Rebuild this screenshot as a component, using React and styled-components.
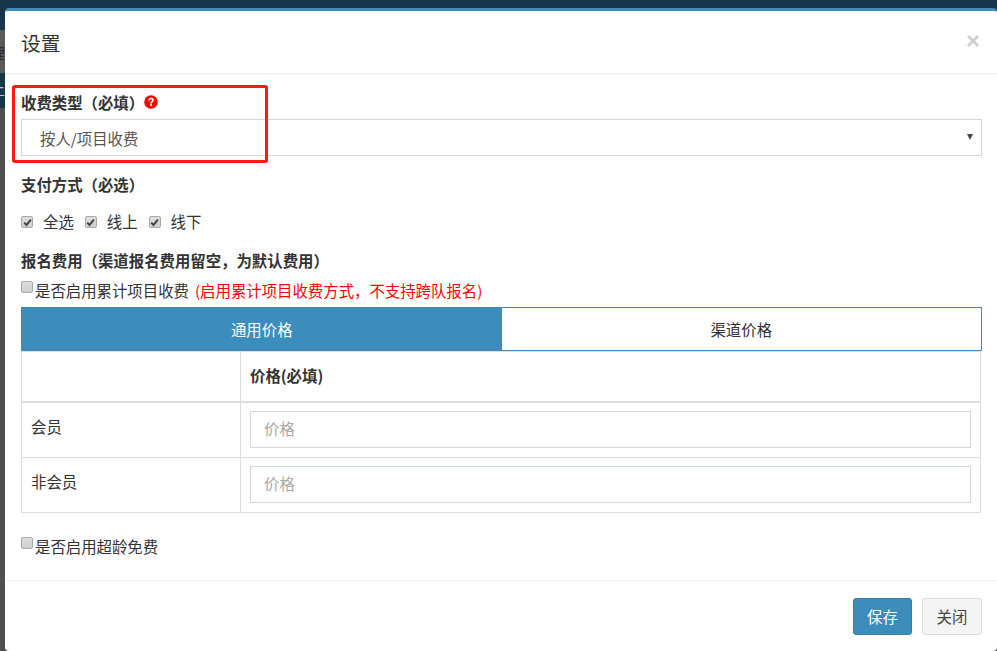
import React from 'react';
import styled, { createGlobalStyle } from 'styled-components';

const Global = createGlobalStyle`
  html, body { margin: 0; padding: 0; height: 100%; overflow: hidden; }
  body { font-family: "Noto Sans CJK SC", "Liberation Sans", sans-serif; font-size: 15.4px; color: #333; }
  * { box-sizing: border-box; }
`;

const Page = styled.div`
  width: 997px;
  height: 651px;
  padding: 8px 0 0 5px;
  position: relative;
  overflow: hidden;
  background: linear-gradient(to bottom,
    #17364a 0, #17364a 30px, #5a5a5a 30px, #5a5a5a 73px,
    #17364a 73px, #17364a 108px, #4f4f4f 108px, #4f4f4f 651px);
`;

const BehindGlyph = styled.span`
  position: absolute;
  left: -10px;
  top: ${p => p.$top}px;
  font-size: 15px;
  line-height: 20px;
  color: ${p => p.$color};
`;

const Modal = styled.div`
  position: relative;
  width: 992px;
  height: 643px;
  background: #fff;
  border-top: 3px solid #3c8dbc;
  border-radius: 4px;
  display: flex;
  flex-direction: column;
`;

const Header = styled.header`
  height: 64px;
  flex: none;
  border-bottom: 2px solid #f4f4f4;
  display: flex;
  align-items: center;
  justify-content: space-between;
  padding: 1px 17px 0 16px;
`;

const Title = styled.h4`
  margin: 0;
  font-size: 19.8px;
  font-weight: 400;
  line-height: 22px;
  color: #333;
`;

const Close = styled.span`
  font-family: "Liberation Sans", sans-serif;
  font-size: 24px;
  font-weight: 700;
  line-height: 1;
  color: #cfcfcf;
  margin-top: -4px;
`;

const Body = styled.div`
  flex: 1;
  min-height: 0;
  padding: 17px 15px 0 16px;
  display: flex;
  flex-direction: column;
`;

const Label = styled.div`
  font-size: 15.4px;
  font-weight: 700;
  color: #333;
  margin-top: ${p => p.$top || 0}px;
  display: flex;
  align-items: center;
  height: 20px;
  line-height: 20px;
`;

const Help = styled.svg`
  width: 14px;
  height: 14px;
  margin-left: 0;
`;

const SelectBox = styled.div`
  margin-top: 7px;
  height: 37px;
  flex: none;
  border: 1px solid #d2d6de;
  display: flex;
  align-items: center;
  justify-content: space-between;
  padding: 0 8px 0 18px;
  color: #555;
`;

const Caret = styled.span`
  width: 0;
  height: 0;
  border-left: 3px solid transparent;
  border-right: 3px solid transparent;
  border-top: 6px solid #444;
  margin-top: -2px;
`;

const CheckRow = styled.div`
  display: flex;
  align-items: center;
  gap: ${p => p.$gap || 0}px;
  height: 20px;
  flex: none;
  line-height: 20px;
  margin-top: ${p => p.$top || 0}px;
`;

const CheckItem = styled.label`
  display: inline-flex;
  align-items: center;
  color: #333;
`;

const Box = styled.span`
  width: 12px;
  height: 12px;
  flex: none;
  border: 1px solid #a9a9a9;
  border-radius: 2px;
  background: linear-gradient(#dedede, #cfcfcf);
  display: inline-flex;
  align-items: center;
  justify-content: center;
  transform: translateY(${p => (p.$checked ? 1 : -3)}px);
`;

const CheckText = styled.span`
  margin-left: ${p => p.$gap}px;
`;

const Warn = styled.span`
  color: #f00;
  margin-left: 6px;
`;

const Tabs = styled.div`
  margin-top: 7px;
  height: 44px;
  flex: none;
  display: flex;
  border: 1px solid #3c8dbc;
`;

const Tab = styled.div`
  flex: 1 1 50%;
  display: flex;
  align-items: center;
  justify-content: center;
  background: ${p => (p.$active ? '#3c8dbc' : '#fff')};
  color: ${p => (p.$active ? '#fff' : '#333')};
`;

const Table = styled.table`
  width: 960px;
  border-collapse: collapse;
  table-layout: fixed;
  flex: none;
`;

const Th = styled.th`
  border: 1px solid #ddd;
  border-bottom-width: 2px;
  height: 50px;
  text-align: left;
  padding: 0 9px 2px;
  font-weight: 700;
  font-size: 15.4px;
  vertical-align: middle;
`;

const Td = styled.td`
  border: 1px solid #ddd;
  height: 55px;
  padding: 8px 9px 9px;
  vertical-align: top;
  line-height: 20px;
`;

const NameCell = styled(Td)`
  padding-top: 13px;
`;

const PriceInput = styled.input`
  display: block;
  width: 100%;
  height: 37px;
  border: 1px solid #d2d6de;
  padding: 0 13px 3px;
  font: inherit;
  background: #fff;
  outline: none;
  &::placeholder { color: #a9a9a9; opacity: 1; }
`;

const Footer = styled.footer`
  height: 71px;
  flex: none;
  border-top: 1px solid #f4f4f4;
  display: flex;
  justify-content: flex-end;
  align-items: flex-start;
  gap: 10px;
  padding: 17px 15px 0 0;
`;

const Button = styled.button`
  height: 37px;
  width: ${p => p.$w}px;
  border-radius: 3px;
  font: inherit;
  padding: 0 0 2px;
  border: 1px solid ${p => (p.$primary ? '#367fa9' : '#ddd')};
  background: ${p => (p.$primary ? '#3c8dbc' : '#f4f4f4')};
  color: ${p => (p.$primary ? '#fff' : '#444')};
`;

const Annotation = styled.div`
  position: absolute;
  left: 12px;
  top: 85px;
  width: 256px;
  height: 78px;
  border: 3px solid #ff1a10;
  border-radius: 3px;
  pointer-events: none;
`;

const Tick = () => (
  <svg width="9" height="9" viewBox="0 0 9 9" aria-hidden="true">
    <path d="M1.2 4.6 L3.5 7 L7.9 1.6" fill="none" stroke="#444" strokeWidth="2" />
  </svg>
);

const Check = ({ checked, gap, children }) => (
  <CheckItem>
    <Box $checked={checked}>{checked && <Tick />}</Box>
    <CheckText $gap={gap}>{children}</CheckText>
  </CheckItem>
);

const rows = ['会员', '非会员'];

export default function App() {
  return (
    <Page>
      <Global />
      <BehindGlyph $top={43} $color="#2b2b2b">理</BehindGlyph>
      <BehindGlyph $top={79} $color="#b8c4cc">上</BehindGlyph>
      <Modal>
        <Header>
          <Title>设置</Title>
          <Close>×</Close>
        </Header>
        <Body>
          <Label>
            收费类型（必填）
            <Help viewBox="0 0 14 14" aria-hidden="true">
              <circle cx="7" cy="7" r="6.8" fill="#f00" />
              <path d="M4.2 5.4 C4.3 3.6 5.5 2.7 7.1 2.7 C8.8 2.7 10 3.7 10 5.1 C10 6.9 7.9 6.9 7.9 8.4 L6.1 8.4 C6.1 6.2 8.1 6.2 8.1 5.2 C8.1 4.7 7.7 4.3 7 4.3 C6.4 4.3 6 4.8 5.9 5.6 Z" fill="#fff" />
              <rect x="6.1" y="9.2" width="1.8" height="1.8" fill="#fff" />
            </Help>
          </Label>
          <SelectBox>
            按人/项目收费
            <Caret />
          </SelectBox>
          <Label $top={18}>支付方式（必选）</Label>
          <CheckRow $top={17} $gap={11}>
            <Check checked gap={10}>全选</Check>
            <Check checked gap={10}>线上</Check>
            <Check checked gap={10}>线下</Check>
          </CheckRow>
          <Label $top={19}>报名费用（渠道报名费用留空，为默认费用）</Label>
          <CheckRow $top={10}>
            <Check gap={2}>是否启用累计项目收费</Check>
            <Warn>(启用累计项目收费方式，不支持跨队报名)</Warn>
          </CheckRow>
          <Tabs>
            <Tab $active>通用价格</Tab>
            <Tab>渠道价格</Tab>
          </Tabs>
          <Table>
            <colgroup>
              <col style={{ width: 219 }} />
              <col />
            </colgroup>
            <thead>
              <tr>
                <Th />
                <Th>价格(必填)</Th>
              </tr>
            </thead>
            <tbody>
              {rows.map(name => (
                <tr key={name}>
                  <NameCell>{name}</NameCell>
                  <Td>
                    <PriceInput placeholder="价格" />
                  </Td>
                </tr>
              ))}
            </tbody>
          </Table>
          <CheckRow $top={23}>
            <Check gap={2}>是否启用超龄免费</Check>
          </CheckRow>
        </Body>
        <Footer>
          <Button $primary $w={59}>保存</Button>
          <Button $w={60}>关闭</Button>
        </Footer>
      </Modal>
      <Annotation />
    </Page>
  );
}
